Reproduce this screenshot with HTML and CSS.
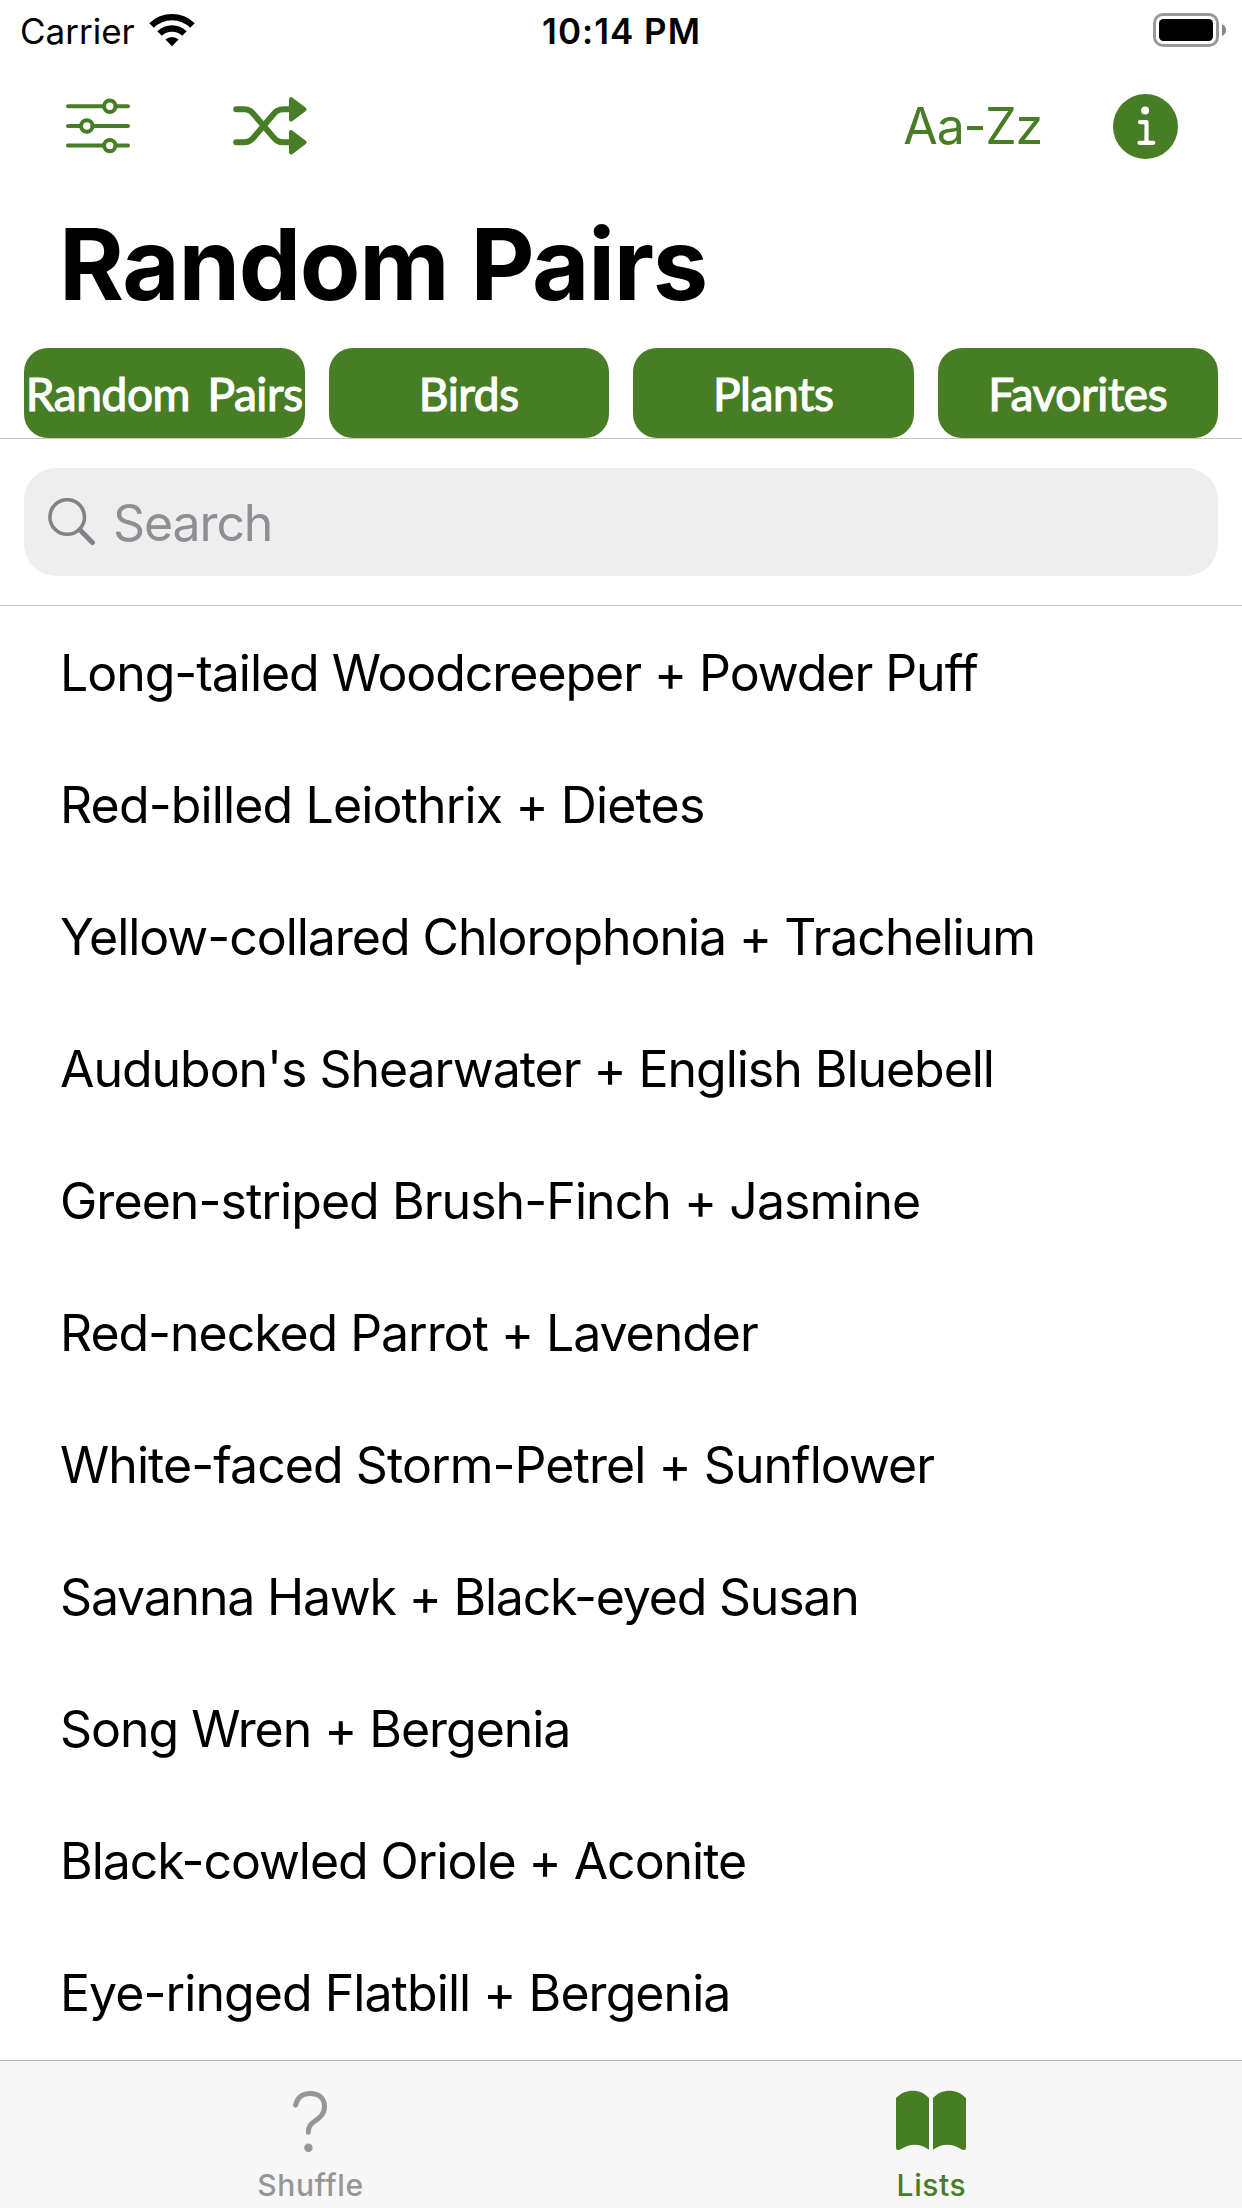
FILE: index.html
```html
<!DOCTYPE html>
<html lang="en">
<head>
<meta charset="utf-8">
<title>Random Pairs</title>
<link rel="stylesheet" href="styles.css">
</head>
<body>
<div class="screen">
  <div class="status">
    <div class="status-left">
      <span class="carrier">Carrier</span>
      <svg class="wifi" width="46" height="34" viewBox="0 0 46 34">
        <path d="M0.3 10.2A32.4 32.4 0 0 1 45.7 10.2L41.2 14.7A26 26 0 0 0 4.8 14.7Z"/>
        <path d="M8.3 18.3A21 21 0 0 1 37.7 18.3L33.2 22.8A14.6 14.6 0 0 0 12.8 22.8Z"/>
        <path d="M16.4 26.6A9.6 9.6 0 0 1 29.6 26.6L23 33.2Z"/>
      </svg>
    </div>
    <span class="time">10:14 PM</span>
    <div class="status-right">
      <svg width="74" height="34" viewBox="0 0 74 34">
        <rect x="1.5" y="1.5" width="63" height="31" rx="8.5" fill="#fff" stroke="#999" stroke-width="3"/>
        <rect x="6" y="6" width="54" height="22" rx="4.5"/>
        <path d="M69 11Q73 13 73 17T69 23Z" fill="#888"/>
      </svg>
    </div>
  </div>
  <nav class="toolbar">
    <svg class="sliders" width="64" height="56" viewBox="0 0 64 56" fill="none" stroke="#477d24" stroke-width="4" stroke-linecap="round">
      <path d="M2 8.3H62M2 28H62M2 47.6H62"/>
      <g fill="#fff"><circle cx="43.8" cy="8.3" r="5.7"/><circle cx="20.8" cy="28" r="5.7"/><circle cx="43.8" cy="47.6" r="5.7"/></g>
    </svg>
    <svg class="shuffle" width="75" height="60" viewBox="0 0 75 60">
      <g fill="none" stroke="#477d24" stroke-width="6" stroke-linecap="round">
        <path d="M3.2 13.3H11C16.4 13.3 18.3 15.5 21.4 19L39.8 40.6C43 44.3 45 46.3 50.8 46.3H57"/>
        <path d="M3.2 46.3H11C16.4 46.3 18.3 44.1 21.4 40.6L39.8 19C43 15.3 45 13.3 50.8 13.3H57"/>
      </g>
      <g fill="#477d24" stroke="#477d24" stroke-width="4" stroke-linejoin="round"><path d="M58 3.2V23.6L71.6 13.4ZM58 36.1V56.6L71.6 46.3Z"/></g>
    </svg>
    <span class="sort">Aa-Zz</span>
    <svg class="info" width="65" height="65" viewBox="0 0 65 65">
      <circle cx="32.5" cy="32.5" r="32.5" fill="#477d24"/>
      <circle cx="32.1" cy="16.6" r="4" fill="#fff"/>
      <path d="M27 28.1H33.5V48.8M26.5 48.8H40.3" fill="none" stroke="#fff" stroke-width="4.2" stroke-linecap="round" stroke-linejoin="round"/>
    </svg>
  </nav>
  <h1 class="title">Random Pairs</h1>
  <div class="filters">
    <button class="filter">Random Pairs</button>
    <button class="filter">Birds</button>
    <button class="filter">Plants</button>
    <button class="filter">Favorites</button>
  </div>
  <div class="search-area">
    <div class="search">
      <svg width="48" height="48" viewBox="0 0 48 48" fill="none" stroke="#828287">
        <circle cx="19.2" cy="19" r="17.3" stroke-width="3.6"/>
        <path d="M32 32.1L44.4 44.5" stroke-width="5" stroke-linecap="round"/>
      </svg>
      <span>Search</span>
    </div>
  </div>
  <ul class="list">
    <li>Long-tailed Woodcreeper + Powder Puff</li>
    <li>Red-billed Leiothrix + Dietes</li>
    <li>Yellow-collared Chlorophonia + Trachelium</li>
    <li>Audubon's Shearwater + English Bluebell</li>
    <li>Green-striped Brush-Finch + Jasmine</li>
    <li>Red-necked Parrot + Lavender</li>
    <li>White-faced Storm-Petrel + Sunflower</li>
    <li>Savanna Hawk + Black-eyed Susan</li>
    <li>Song Wren + Bergenia</li>
    <li>Black-cowled Oriole + Aconite</li>
    <li>Eye-ringed Flatbill + Bergenia</li>
  </ul>
  <footer class="tabs">
    <div class="tab">
      <svg width="40" height="64" viewBox="0 0 40 64">
        <path d="M5.6 16.1C7 9 12 4.4 20 4.4C29 4.4 34.5 9.5 34.5 17.5C34.5 25 30 28.5 25 32C20.5 35.2 18.3 37.5 18.3 43.2" fill="none" stroke="#969696" stroke-width="5" stroke-linecap="round"/>
        <circle cx="18.4" cy="58.8" r="4.2" fill="#969696"/>
      </svg>
      <span>Shuffle</span>
    </div>
    <div class="tab active">
      <svg width="70" height="64" viewBox="0 0 70 64" fill="#477d24">
        <path d="M0 9C9-.8 24.5-.8 33 9V60.8C24.5 54 13.5 54 4.3 60.6Q0 62.2 0 58.2Z"/>
        <path d="M70 9C61-.8 45.5-.8 37 9V60.8C45.5 54 56.5 54 65.7 60.6Q70 62.2 70 58.2Z"/>
      </svg>
      <span>Lists</span>
    </div>
  </footer>
</div>
</body>
</html>
```
FILE: styles.css
```css
* { box-sizing: border-box; margin: 0; padding: 0; }

body {
  background: #fff;
  color: #000;
  font-family: Inter, "Liberation Sans", sans-serif;
}

svg { display: block; flex: none; }

.screen {
  width: 1242px;
  height: 2208px;
  display: flex;
  flex-direction: column;
  overflow: hidden;
}

.status {
  height: 60px;
  flex: none;
  display: grid;
  grid-template-columns: 1fr auto 1fr;
  padding: 0 15px 0 20px;
  font-size: 35px;
  line-height: 62px;
}
.status-left { display: flex; gap: 14px; }
.wifi { margin-top: 13px; }
.time { padding-right: 4px; font-weight: 600; letter-spacing: 1px; }
.status-right { display: flex; justify-content: flex-end; padding-top: 13px; }

.toolbar {
  height: 132px;
  flex: none;
  display: flex;
  align-items: center;
  padding: 0 64px 0 66px;
}
.shuffle { margin-left: 103px; }
.sort {
  margin-left: auto;
  margin-right: 71px;
  font-size: 50px;
  line-height: 60px;
  letter-spacing: -1.2px;
  color: #477d24;
}

.title {
  height: 156px;
  flex: none;
  padding-left: 59px;
  font-size: 99px;
  font-weight: 700;
  line-height: 144px;
  letter-spacing: -1.3px;
}

.filters {
  height: 91px;
  flex: none;
  display: grid;
  grid-template-columns: repeat(4, 1fr);
  gap: 24px;
  padding: 0 24px;
  border-bottom: 1px solid #c6c6c6;
}
.filter {
  display: flex;
  align-items: center;
  justify-content: center;
  padding-top: 1px;
  border: 0;
  border-radius: 24px;
  background: #477d24;
  color: #fff;
  font-family: Lato, "Liberation Sans", sans-serif;
  font-size: 46px;
  font-weight: 400;
  letter-spacing: -.4px;
  word-spacing: 6px;
  -webkit-text-stroke: 1.2px #fff;
  white-space: nowrap;
}

.search-area {
  height: 167px;
  flex: none;
  padding: 29px 24px;
  border-bottom: 1px solid #c6c6c6;
}
.search {
  height: 108px;
  display: flex;
  align-items: center;
  gap: 17px;
  padding-left: 24px;
  border-radius: 32px;
  background: #eee;
  color: #8e8e93;
  font-size: 50px;
  letter-spacing: -1.1px;
}
.search span { padding-top: 2px; }

.list { flex: 1; list-style: none; }
.list li {
  height: 132px;
  padding-left: 60px;
  font-size: 50px;
  line-height: 134px;
  letter-spacing: -1.04px;
  white-space: nowrap;
}
.list li:nth-child(2) { letter-spacing: -.86px; }
.list li:nth-child(5),
.list li:nth-child(7),
.list li:nth-child(11) { letter-spacing: -.94px; }
.list li:nth-child(8) { letter-spacing: -1.2px; }

.tabs {
  height: 148px;
  flex: none;
  display: grid;
  grid-template-columns: 1fr 1fr;
  border-top: 1px solid #b2b2b2;
  background: #f7f7f7;
}
.tab {
  display: flex;
  flex-direction: column;
  align-items: center;
  padding: 28px 2px 0 0;
  color: #969696;
  font-size: 30px;
  font-weight: 500;
  line-height: 36px;
  letter-spacing: .6px;
}
.tab span { margin-top: 14px; padding-left: 2px; }
.active { color: #477d24; }
```
